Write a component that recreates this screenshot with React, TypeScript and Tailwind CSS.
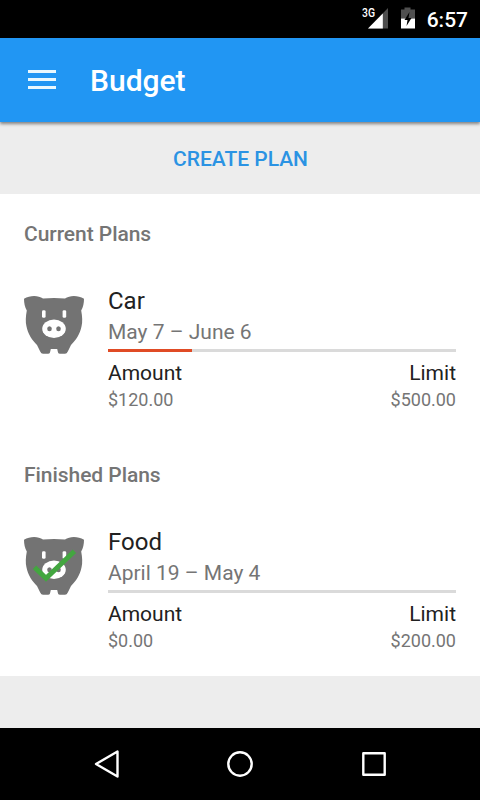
interface Plan {
  name: string
  period: string
  amount: string
  limit: string
  progress: number
  finished?: boolean
}

const currentPlans: Plan[] = [
  { name: 'Car', period: 'May 7 – June 6', amount: '$120.00', limit: '$500.00', progress: 24 },
]

const finishedPlans: Plan[] = [
  { name: 'Food', period: 'April 19 – May 4', amount: '$0.00', limit: '$200.00', progress: 0, finished: true },
]

function PigIcon({ checked }: { checked?: boolean }) {
  return (
    <svg width="60" height="60" viewBox="0 0 60 60" className="shrink-0">
      <path
        fill="#737373"
        d="M0 3.800C6 .2 14 0 19 3.600Q30 2.400 41 3.600C46 0 54 .2 60 3.800Q60 11 57.200 15.500Q59 25 57.600 31C56 39 52 45 47 50L43.800 56.600Q42.800 58.800 41 58.800H36Q34.400 58.800 34 57.400L33.200 54H26.800L26 57.400Q25.600 58.800 24 58.800H19Q17.200 58.800 16.200 56.600L13 50C8 45 4 39 2.400 31Q1 25 2.800 15.500Q0 11 0 3.800Z"
      />
      <rect x="18" y="15.200" width="3.600" height="7.600" rx="1.400" fill="#fff" />
      <rect x="38.600" y="15.200" width="3.600" height="7.600" rx="1.400" fill="#fff" />
      <ellipse cx="30" cy="33.800" rx="11.800" ry="9.200" fill="#fff" />
      <ellipse cx="25.500" cy="33.800" rx="2.300" ry="2.500" fill="#737373" />
      <ellipse cx="34.500" cy="33.800" rx="2.300" ry="2.500" fill="#737373" />
      {checked && <path d="M10.500 31.300L22 42.200L50.400 15.200" fill="none" stroke="#43a640" strokeWidth="5" />}
    </svg>
  )
}

function StatusBar() {
  return (
    <div className="flex h-[38px] items-center justify-end bg-black pr-3 text-white">
      <svg width="56" height="38" viewBox="0 0 56 38">
        <path d="M27 8V28.500H7Z" fill="#4d4d4d" />
        <path d="M21.800 13.500V28.500H7Z" fill="#fff" />
        <text x="1" y="17" fill="#fff" fontSize="12" fontWeight="500" textLength="13" lengthAdjust="spacingAndGlyphs" fontFamily="Roboto, sans-serif">
          3G
        </text>
        <path d="M40 9.500H43.500V7.500H49.500V9.500H54V18.500H40Z" fill="#505050" />
        <path d="M40 18.500H54V28.500H40Z" fill="#fff" />
        <path d="M48.500 12L43.500 20H46.500L45.500 26L50.500 18H47.500Z" fill="#000" />
      </svg>
      <span className="ml-[10px] pt-0.5 text-[21px] leading-9 font-medium">6:57</span>
    </div>
  )
}

function Toolbar() {
  return (
    <header className="relative z-10 flex h-[84px] items-center bg-[#2196f3] pl-7 text-white shadow-[0_2px_3px_rgba(0,0,0,0.45)]">
      <button className="mb-px flex w-7 flex-col gap-[5px]" aria-label="Menu">
        <span className="h-[3px] w-7 bg-[#e9f8fe]" />
        <span className="h-[3px] w-7 bg-[#e9f8fe]" />
        <span className="h-[3px] w-7 bg-[#e9f8fe]" />
      </button>
      <h1 className="ml-[34px] pt-0.5 text-[30px] leading-9 font-medium">Budget</h1>
    </header>
  )
}

function PlanRow({ plan }: { plan: Plan }) {
  return (
    <div className="flex gap-6 px-6">
      <div className="pt-[9px]">
        <PigIcon checked={plan.finished} />
      </div>
      <div className="flex-1">
        <p className="text-2xl leading-[30px] text-[#212121]">{plan.name}</p>
        <p className="text-[21px] leading-8 text-[#757575]">{plan.period}</p>
        <div className="mt-px h-[3px] bg-[#dadada]">
          <div className="h-full bg-[#e04b25]" style={{ width: `${plan.progress}%` }} />
        </div>
        <div className="mt-[7px] flex justify-between text-[21px] leading-7 text-[#212121]">
          <span>Amount</span>
          <span>Limit</span>
        </div>
        <div className="flex justify-between text-lg leading-[26px] text-[#757575]">
          <span>{plan.amount}</span>
          <span>{plan.limit}</span>
        </div>
      </div>
    </div>
  )
}

function PlanSection({ title, plans }: { title: string; plans: Plan[] }) {
  return (
    <section className="h-[241px] bg-white">
      <h2 className="h-[92px] px-6 pt-1 text-[21px] leading-[72px] font-medium tracking-[-0.05px] text-[#757575]">{title}</h2>
      {plans.map((plan) => (
        <PlanRow key={plan.name} plan={plan} />
      ))}
    </section>
  )
}

function NavigationBar() {
  return (
    <nav className="flex h-[72px] items-center justify-center gap-[94px] bg-black">
      <svg width="40" height="40" viewBox="0 0 40 40" fill="none" stroke="#fff" strokeWidth="2.4" strokeLinejoin="round">
        <path d="M31.500 7.500V32.500L10 20Z" />
      </svg>
      <svg width="40" height="40" viewBox="0 0 40 40" fill="none" stroke="#fff" strokeWidth="2.4">
        <circle cx="20" cy="20" r="11.700" />
      </svg>
      <svg width="40" height="40" viewBox="0 0 40 40" fill="none" stroke="#fff" strokeWidth="2.4" strokeLinejoin="round">
        <path d="M9.300 9.300H30.700V30.700H9.300Z" />
      </svg>
    </nav>
  )
}

export default function App() {
  return (
    <div className="flex h-[800px] w-[480px] flex-col overflow-hidden bg-[#ededed] font-[Roboto,sans-serif]">
      <StatusBar />
      <Toolbar />
      <button className="h-[72px] pt-[3px] pl-px text-[21px] font-medium text-[#2b93e3]">CREATE PLAN</button>
      <main className="flex-1">
        <PlanSection title="Current Plans" plans={currentPlans} />
        <PlanSection title="Finished Plans" plans={finishedPlans} />
      </main>
      <NavigationBar />
    </div>
  )
}
